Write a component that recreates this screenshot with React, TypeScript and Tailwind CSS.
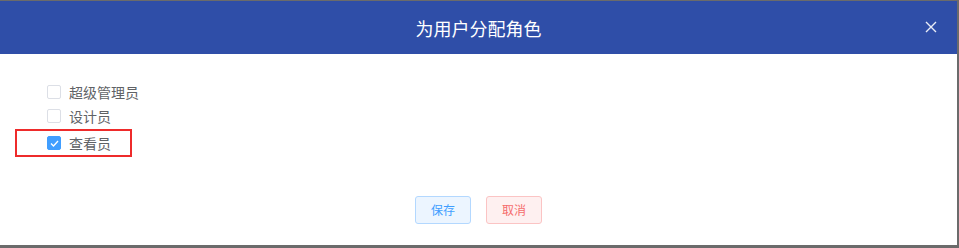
import React, { useState } from 'react';

const roles = [
  { id: 'super', name: '超级管理员' },
  { id: 'designer', name: '设计员' },
  { id: 'viewer', name: '查看员' },
];

export default function App() {
  const [checked, setChecked] = useState<string[]>(['viewer']);

  const toggle = (id: string) =>
    setChecked((c) => (c.includes(id) ? c.filter((x) => x !== id) : [...c, id]));

  return (
    <div
      className="w-[959px] h-[248px] bg-[#6b6b6b] pt-px pr-[2px] pb-[3px] overflow-hidden"
      style={{ fontFamily: '"Noto Sans CJK SC", "Noto Sans", sans-serif' }}
    >
      <div className="h-full bg-white flex flex-col">
        {/* Header */}
        <div className="relative h-[53px] bg-[#2f4ea8] flex items-center justify-center">
          <span className="text-white text-[18px] leading-none">为用户分配角色</span>
          <button className="absolute right-[20px] top-[20px] text-white/90">
            <svg width="12" height="12" viewBox="0 0 12 12" stroke="currentColor" strokeWidth="1.4">
              <path d="M1 1 L11 11 M11 1 L1 11" />
            </svg>
          </button>
        </div>

        {/* Body */}
        <div className="flex-1 flex flex-col pl-[16px] pt-[26px]">
          {roles.map((r) => {
            const on = checked.includes(r.id);
            const row = (
              <label
                className="flex items-center gap-[8px] h-[24px] pl-[31px] cursor-pointer"
                onClick={() => toggle(r.id)}
              >
                <span
                  className={`w-[14px] h-[14px] rounded-[2px] border flex items-center justify-center ${
                    on ? 'bg-[#409eff] border-[#409eff]' : 'bg-white border-[#dcdfe6]'
                  }`}
                >
                  {on && (
                    <svg width="9" height="7" viewBox="0 0 9 7" fill="none" stroke="white" strokeWidth="1.3">
                      <path d="M1 3.5 L3.5 6 L8 1" />
                    </svg>
                  )}
                </span>
                <span className="text-[14px] text-[#606266] leading-none">{r.name}</span>
              </label>
            );
            return r.id === 'viewer' ? (
              <div key={r.id} className="w-[117px] h-[28px] border-2 border-[#ee2b2b] flex items-center mt-px -ml-px">
                <div className="-ml-px">{row}</div>
              </div>
            ) : (
              <div key={r.id}>{row}</div>
            );
          })}
        </div>

        {/* Footer */}
        <div className="flex justify-center gap-[15px] pb-[21px]">
          <button className="w-[56px] h-[28px] rounded-[3px] border border-[#b3d8ff] bg-[#ecf5ff] text-[#409eff] text-[12px]">
            保存
          </button>
          <button className="w-[56px] h-[28px] rounded-[3px] border border-[#fbc4c4] bg-[#fef0f0] text-[#f56c6c] text-[12px]">
            取消
          </button>
        </div>
      </div>
    </div>
  );
}
